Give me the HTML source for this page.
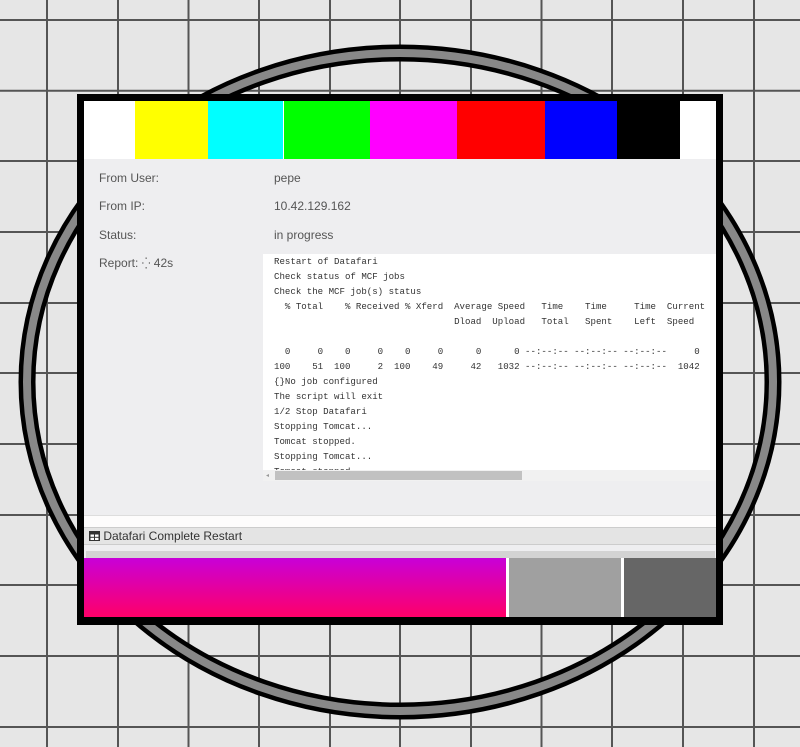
<!DOCTYPE html>
<html><head><meta charset="utf-8"><style>
*{margin:0;padding:0;box-sizing:border-box}
body{width:800px;height:747px;overflow:hidden;background:#e6e6e6;position:relative;font-family:"Liberation Sans",sans-serif}
svg.bg{position:absolute;left:0;top:0}
.frame{position:absolute;left:77px;top:94px;width:646px;height:531px;background:#000}
.a{position:absolute}
.lbl{position:absolute;font-size:12px;color:#555}
pre{font-family:"Liberation Mono","DejaVu Sans Mono",monospace;font-size:9.1px;line-height:15px;color:#333;position:absolute}
</style></head><body>
<svg class="bg" width="800" height="747">
<g stroke="#555" stroke-width="2">
<line x1="47" y1="0" x2="47" y2="747"/><line x1="118" y1="0" x2="118" y2="747"/><line x1="188.5" y1="0" x2="188.5" y2="747"/><line x1="259" y1="0" x2="259" y2="747"/><line x1="330" y1="0" x2="330" y2="747"/><line x1="400" y1="0" x2="400" y2="747"/><line x1="471" y1="0" x2="471" y2="747"/><line x1="541.5" y1="0" x2="541.5" y2="747"/><line x1="612" y1="0" x2="612" y2="747"/><line x1="683" y1="0" x2="683" y2="747"/><line x1="754" y1="0" x2="754" y2="747"/>
<line x1="0" y1="20" x2="800" y2="20"/><line x1="0" y1="90.7" x2="800" y2="90.7"/><line x1="0" y1="161" x2="800" y2="161"/><line x1="0" y1="232" x2="800" y2="232"/><line x1="0" y1="303" x2="800" y2="303"/><line x1="0" y1="373" x2="800" y2="373"/><line x1="0" y1="444" x2="800" y2="444"/><line x1="0" y1="515" x2="800" y2="515"/><line x1="0" y1="585" x2="800" y2="585"/><line x1="0" y1="656" x2="800" y2="656"/><line x1="0" y1="727" x2="800" y2="727"/>
</g>
<ellipse cx="400" cy="382" rx="373" ry="329" fill="none" stroke="#000" stroke-width="17"/>
<ellipse cx="400" cy="382" rx="373" ry="329" fill="none" stroke="#888" stroke-width="8"/>
</svg>
<div class="frame"></div>
<div class="a" style="left:84px;top:101px;width:632px;height:58px;background:#fff"></div>
<div class="a" style="left:135px;top:101px;width:73px;height:58px;background:#ff0"></div>
<div class="a" style="left:208px;top:101px;width:75px;height:58px;background:#0ff"></div>
<div class="a" style="left:284px;top:101px;width:86px;height:58px;background:#0f0"></div>
<div class="a" style="left:370px;top:101px;width:87px;height:58px;background:#f0f"></div>
<div class="a" style="left:457px;top:101px;width:88px;height:58px;background:#f00"></div>
<div class="a" style="left:545px;top:101px;width:72px;height:58px;background:#00f"></div>
<div class="a" style="left:617px;top:101px;width:63px;height:58px;background:#000"></div>
<div class="a" style="left:84px;top:159px;width:632px;height:356px;background:#eeeef0"></div>
<div class="lbl" style="left:99px;top:171px">From User:</div><div class="lbl" style="left:274px;top:171px">pepe</div>
<div class="lbl" style="left:99px;top:199px">From IP:</div><div class="lbl" style="left:274px;top:199px">10.42.129.162</div>
<div class="lbl" style="left:99px;top:228px">Status:</div><div class="lbl" style="left:274px;top:228px">in progress</div>
<div class="lbl" style="left:99px;top:256px">Report: <span style="font-size:11px">⁛</span> 42s</div>
<div class="a" style="left:263px;top:254px;width:453px;height:216px;background:#fff;overflow:hidden"><pre style="left:11px;top:0">Restart of Datafari
Check status of MCF jobs
Check the MCF job(s) status
  % Total    % Received % Xferd  Average Speed   Time    Time     Time  Current
                                 Dload  Upload   Total   Spent    Left  Speed

  0     0    0     0    0     0      0      0 --:--:-- --:--:-- --:--:--     0
100    51  100     2  100    49     42   1032 --:--:-- --:--:-- --:--:--  1042
{}No job configured
The script will exit
1/2 Stop Datafari
Stopping Tomcat...
Tomcat stopped.
Stopping Tomcat...
Tomcat stopped.</pre></div>
<div class="a" style="left:263px;top:470px;width:453px;height:11px;background:#f1f1f1"></div>
<div class="a" style="left:275px;top:471px;width:247px;height:9px;background:#c1c1c1"></div>
<div class="a" style="left:266px;top:472px;font-size:6px;color:#999">◂</div>
<div class="a" style="left:84px;top:515px;width:632px;height:1px;background:#ddd"></div>
<div class="a" style="left:84px;top:516px;width:632px;height:11px;background:#fdfcfc"></div>
<div class="a" style="left:84px;top:527px;width:632px;height:18px;background:#e4e4e4;border-top:1px solid #ccc;border-bottom:1px solid #ccc"></div>
<div class="a" style="left:89px;top:529px;font-size:12px;color:#333"><svg width="11" height="10" style="vertical-align:-1px"><rect x="0" y="0" width="11" height="10" fill="#333"/><rect x="1.5" y="3.5" width="3.5" height="2.3" fill="#fff"/><rect x="6" y="3.5" width="3.5" height="2.3" fill="#fff"/><rect x="1.5" y="6.8" width="3.5" height="2.2" fill="#fff"/><rect x="6" y="6.8" width="3.5" height="2.2" fill="#fff"/></svg> Datafari Complete Restart</div>
<div class="a" style="left:84px;top:545px;width:632px;height:13px;background:#eeeef0"></div>
<div class="a" style="left:86px;top:551px;width:629px;height:7px;background:#d3d3d3"></div>
<div class="a" style="left:84px;top:558px;width:422px;height:59px;background:linear-gradient(#c800d8,#ff0068)"></div>
<div class="a" style="left:506px;top:558px;width:3px;height:59px;background:#fff"></div>
<div class="a" style="left:509px;top:558px;width:112px;height:59px;background:#a0a0a0"></div>
<div class="a" style="left:621px;top:558px;width:3px;height:59px;background:#fff"></div>
<div class="a" style="left:624px;top:558px;width:92px;height:59px;background:#666"></div>
</body></html>
